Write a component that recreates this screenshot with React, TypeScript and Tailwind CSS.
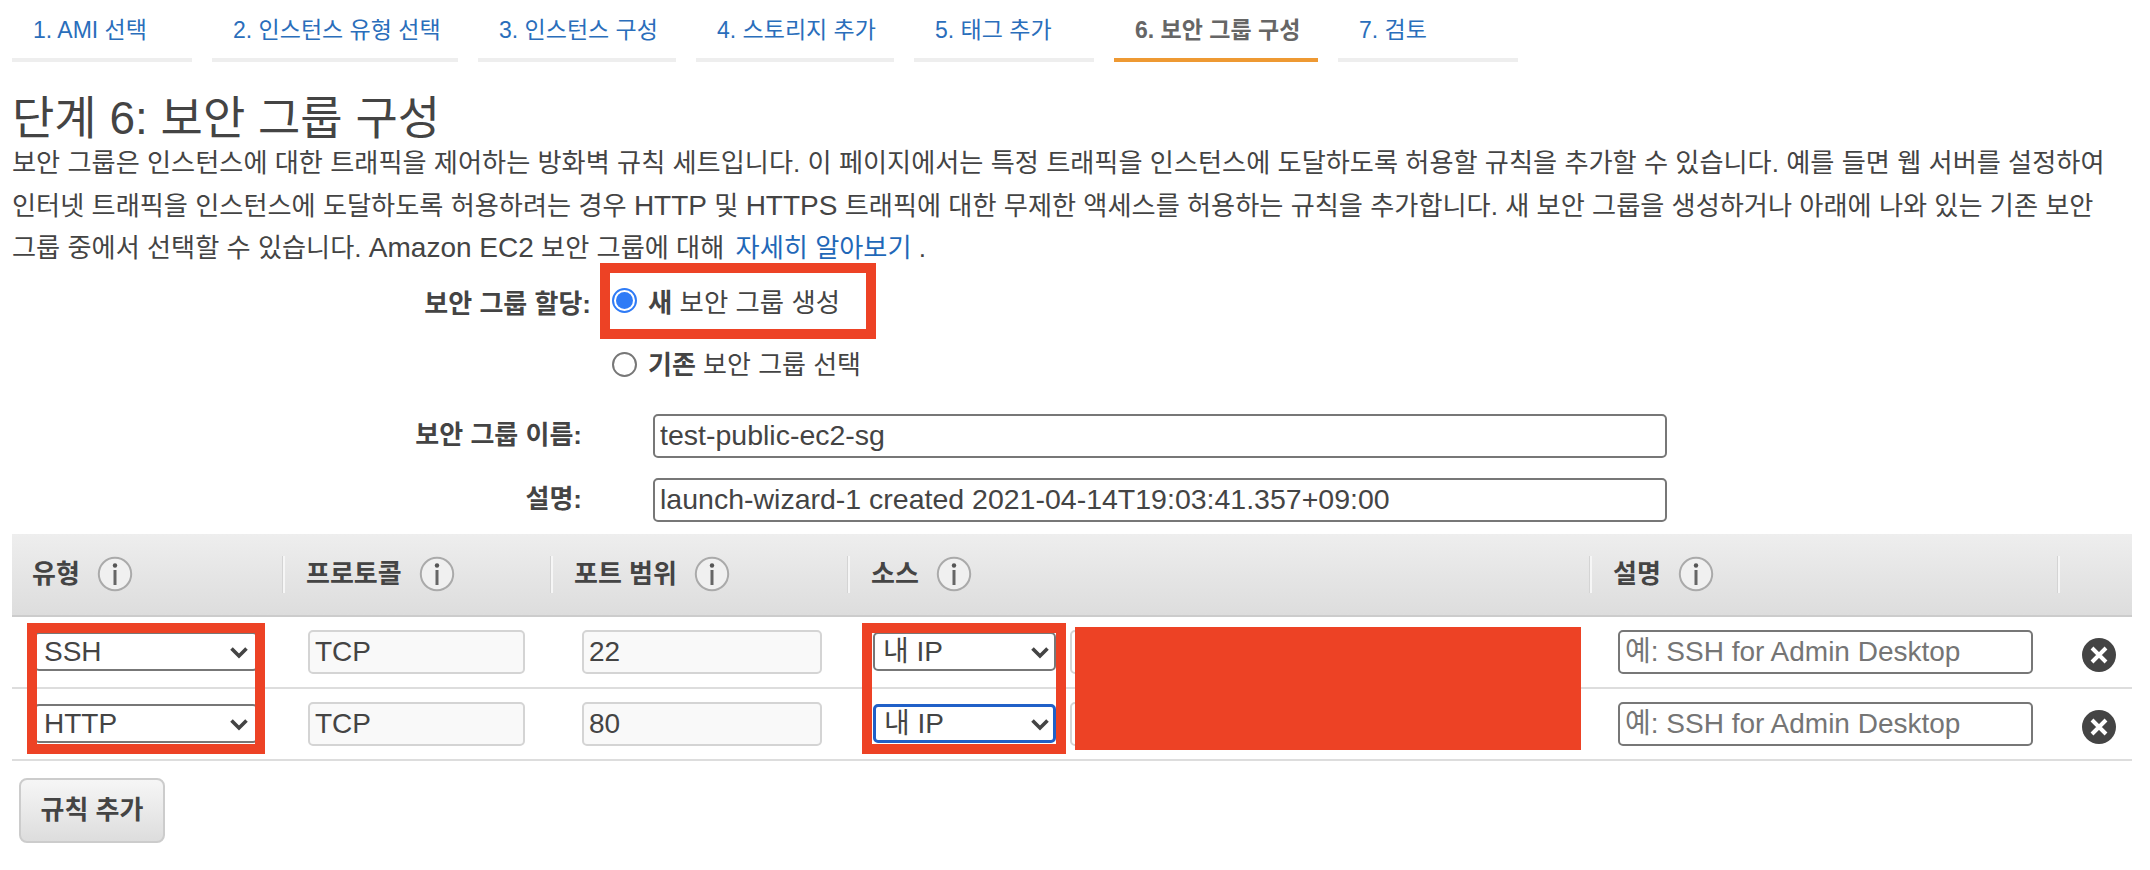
import type { ReactNode } from "react";

const tabs = [
  { label: "1. AMI 선택", width: "w-[180px]" },
  { label: "2. 인스턴스 유형 선택", width: "w-[246px]" },
  { label: "3. 인스턴스 구성", width: "w-[198px]" },
  { label: "4. 스토리지 추가", width: "w-[198px]" },
  { label: "5. 태그 추가", width: "w-[180px]" },
  { label: "6. 보안 그룹 구성", width: "w-[204px]", active: true },
  { label: "7. 검토", width: "w-[180px]" }
];

const rules = [
  { type: "SSH", port: "22", focused: false },
  { type: "HTTP", port: "80", focused: true }
];

function Chevron({ className }: { className: string }) {
  return (
    <svg width="20" height="13" viewBox="0 0 20 13" className={`pointer-events-none absolute top-[14px] ${className}`} aria-hidden="true">
      <path d="M2.5 2.5 L10 10 L17.5 2.5" fill="none" stroke="#444" strokeWidth="3.6" />
    </svg>
  );
}

function InfoIcon() {
  return (
    <svg width="36" height="36" viewBox="0 0 36 36" className="ml-[17px] shrink-0" aria-hidden="true">
      <circle cx="18" cy="18" r="16.2" fill="#f0f0f0" stroke="#aaa" strokeWidth="2" />
      <circle cx="18" cy="9.5" r="2.2" fill="#555" />
      <rect x="16.5" y="14" width="3" height="15" fill="#666" />
    </svg>
  );
}

function RemoveIcon() {
  return (
    <svg width="36" height="36" viewBox="0 0 36 36" aria-hidden="true">
      <circle cx="18" cy="18" r="17" fill="#444" />
      <path d="M11 11 L25 25 M25 11 L11 25" stroke="#fff" strokeWidth="4" />
    </svg>
  );
}

function HeaderCell({ children, first, info = true }: { children?: ReactNode; first?: boolean; info?: boolean }) {
  return (
    <div className="flex h-full items-center">
      {first ? <span className="w-0" /> : <span className="h-[37px] w-[2px] bg-[#f6f6f6] shadow-[-1px_0_0_#d4d4d4]" />}
      {children ? <span className={`text-[26px] font-bold text-[#444] ${first ? "ml-[20px]" : "ml-[21px]"}`}>{children}</span> : null}
      {info ? <InfoIcon /> : null}
    </div>
  );
}

function Select({ value, className, focused }: { value: string; className: string; focused?: boolean }) {
  return (
    <div className={`relative ${className}`}>
      <select
        defaultValue={value}
        className={`h-[39px] w-full appearance-none rounded-[5px] bg-white pl-[8px] text-[28px] leading-[33px] text-[#444] outline-none ${focused ? "border-[3px] border-[#2060c8]" : "border-2 border-[#777]"}`}
      >
        <option>{value}</option>
      </select>
      <Chevron className={value === "내 IP" ? "right-[6px]" : "right-[9px]"} />
    </div>
  );
}

function ReadOnly({ value, width }: { value: string; width: string }) {
  return (
    <input
      readOnly
      value={value}
      className={`h-[44px] rounded-[5px] border-2 border-[#d4d4d4] bg-[#f9f9f9] px-[5px] text-[28px] text-[#444] outline-none ${width}`}
    />
  );
}

function FormRow({ label, value }: { label: string; value: string }) {
  return (
    <div className="flex items-center">
      <label className="w-[570px] text-right text-[26px] font-bold text-[#444]">{label}</label>
      <input
        readOnly
        value={value}
        className="ml-[71px] h-[44px] w-[1014px] rounded-[5px] border-2 border-[#777] px-[5px] text-[28.5px] text-[#444] outline-none"
      />
    </div>
  );
}

export default function App() {
  return (
    <div
      className="relative h-[870px] w-[2150px] overflow-hidden bg-white pl-[12px] pr-[18px] text-[#444]"
      style={{ fontFamily: '"Liberation Sans", "Noto Sans CJK KR", sans-serif' }}
    >
      <nav className="flex gap-[20px]">
        {tabs.map((tab) => (
          <div key={tab.label} className={`${tab.width} h-[62px] border-b-4 pl-[21px] pt-[15px] text-[23px] leading-[30px] ${tab.active ? "border-[#ee9933] font-bold text-[#666]" : "border-[#eeeeee] text-[#2a6ebb]"}`}>
            {tab.label}
          </div>
        ))}
      </nav>

      <h1 className="mt-[33px] text-[46px] font-normal leading-[47px] text-[#444]">단계 6: 보안 그룹 구성</h1>
      <p className="whitespace-nowrap text-[26.2px] leading-[42.5px] text-[#444]">
        보안 그룹은 인스턴스에 대한 트래픽을 제어하는 방화벽 규칙 세트입니다. 이 페이지에서는 특정 트래픽을 인스턴스에 도달하도록 허용할 규칙을 추가할 수 있습니다. 예를 들면 웹 서버를 설정하여
        <br />
        인터넷 트래픽을 인스턴스에 도달하도록 허용하려는 경우 <span className="text-[28px]">HTTP</span> 및 <span className="text-[28px]">HTTPS</span> 트래픽에 대한 무제한 액세스를 허용하는 규칙을 추가합니다. 새 보안 그룹을 생성하거나 아래에 나와 있는 기존 보안
        <br />
        그룹 중에서 선택할 수 있습니다. <span className="text-[28px]">Amazon EC2</span> 보안 그룹에 대해 <a className="ml-[4px] text-[#1f68b8]">자세히 알아보기</a> .
      </p>

      <div className="-mt-[7px] flex">
        <span className="mt-[23px] w-[579px] text-right text-[26px] font-bold leading-[36px]">보안 그룹 할당:</span>
        <div className="ml-[9px] flex flex-col">
          <div className="flex h-[76px] w-[276px] items-center border-[10px] border-[#ed4225] pl-[2px]">
            <span className="flex h-[25px] w-[25px] items-center justify-center rounded-full border-2 border-[#2f7bf6]">
              <span className="h-[17px] w-[17px] rounded-full bg-[#2f7bf6]" />
            </span>
            <span className="ml-[11px] pt-[7px] text-[26.4px]"><b>새</b> 보안 그룹 생성</span>
          </div>
          <div className="mt-[9px] flex h-[34px] items-center pl-[12px]">
            <span className="h-[25px] w-[25px] rounded-full border-2 border-[#777] bg-white" />
            <span className="ml-[11px] pt-[2px] text-[26px]"><b>기존</b> 보안 그룹 선택</span>
          </div>
        </div>
      </div>

      <div className="mt-[32px] flex flex-col gap-[20px]">
        <FormRow label="보안 그룹 이름:" value="test-public-ec2-sg" />
        <FormRow label="설명:" value="launch-wizard-1 created 2021-04-14T19:03:41.357+09:00" />
      </div>

      <div className="mt-[12px] w-[2120px]">
        <div className="grid h-[83px] grid-cols-[271px_268px_297px_742px_468px_74px] border-b-2 border-[#cccccc] bg-gradient-to-b from-[#eeeeee] to-[#dddddd]">
          <HeaderCell first>유형</HeaderCell>
          <HeaderCell>프로토콜</HeaderCell>
          <HeaderCell>포트 범위</HeaderCell>
          <HeaderCell>소스</HeaderCell>
          <HeaderCell>설명</HeaderCell>
          <HeaderCell info={false} />
        </div>
        {rules.map((rule) => (
          <div key={rule.type} className="grid h-[72px] grid-cols-[271px_268px_297px_742px_468px_74px] items-center border-b-2 border-[#dddddd]">
            <div className="pl-[22px]">
              <Select value={rule.type} className="w-[224px]" />
            </div>
            <div className="pl-[25px]">
              <ReadOnly value="TCP" width="w-[217px]" />
            </div>
            <div className="pl-[31px]">
              <ReadOnly value={rule.port} width="w-[240px]" />
            </div>
            <div className="flex items-center pl-[25px]">
              <Select value="내 IP" className="w-[183px]" focused={rule.focused} />
              <input readOnly className="ml-[14px] h-[44px] w-[500px] rounded-[5px] border-2 border-[#d4d4d4] outline-none" />
            </div>
            <div className="pl-[28px]">
              <input
                placeholder="예: SSH for Admin Desktop"
                className="h-[44px] w-[415px] rounded-[5px] border-2 border-[#777] px-[5px] text-[28px] text-[#444] outline-none placeholder:text-[#757575]"
              />
            </div>
            <div className="flex items-center pl-[23px] pt-[6px]">
              <RemoveIcon />
            </div>
          </div>
        ))}
      </div>

      <button
        type="button"
        className="ml-[7px] mt-[17px] h-[65px] w-[146px] rounded-[8px] border-2 border-[#cccccc] bg-gradient-to-b from-[#f6f6f6] to-[#dddddd] text-[26px] font-bold text-[#444]"
      >
        규칙 추가
      </button>

      {/* 캡처에 덧칠된 빨간 표시 */}
      <div className="absolute left-[27px] top-[623px] h-[131px] w-[238px] border-[10px] border-[#ed4225]" />
      <div className="absolute left-[862px] top-[623px] h-[131px] w-[204px] border-[10px] border-[#ed4225]" />
      <div className="absolute left-[1075px] top-[627px] h-[123px] w-[506px] bg-[#ed4225]" />
    </div>
  );
}
